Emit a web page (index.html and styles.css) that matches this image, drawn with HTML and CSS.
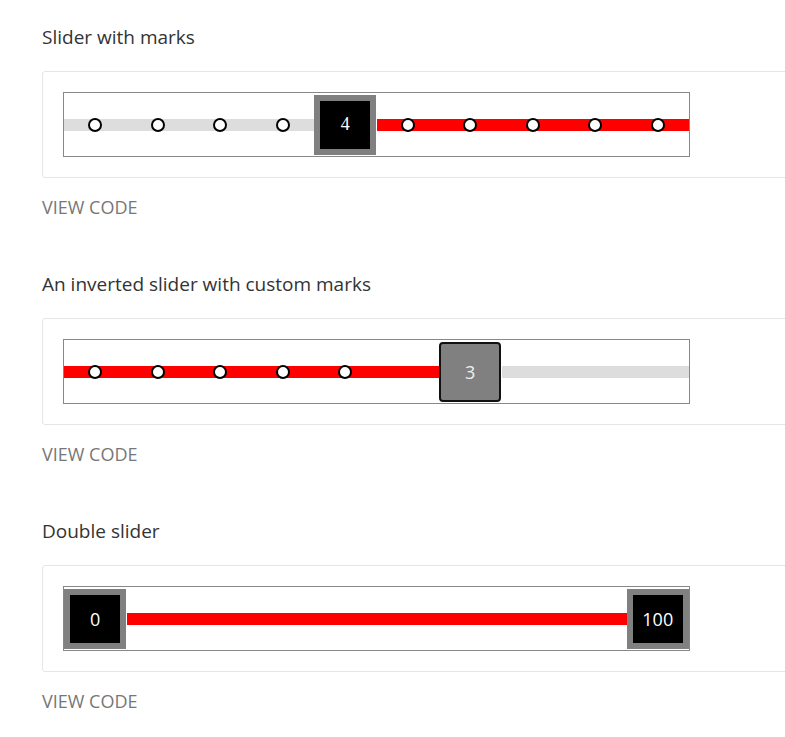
FILE: index.html
```html
<!DOCTYPE html>
<html lang="en">

<head>
  <meta charset="UTF-8">
  <meta name="viewport" content="width=device-width, initial-scale=1.0">
  <title>Sliders</title>
  <link rel="stylesheet" href="styles.css">
</head>

<body>
  <div class="demo">
    <section class="demo__section">
      <h2 class="demo__title">Slider with marks</h2>
      <div class="demo__card">
        <div class="slider">
          <div class="slider__segment slider__segment--off">
            <div class="slider__cell"><span class="slider__mark"></span></div>
            <div class="slider__cell"><span class="slider__mark"></span></div>
            <div class="slider__cell"><span class="slider__mark"></span></div>
            <div class="slider__cell"><span class="slider__mark"></span></div>
          </div>
          <div class="slider__cell"><span class="slider__thumb">4</span></div>
          <div class="slider__segment slider__segment--on">
            <div class="slider__cell"><span class="slider__mark"></span></div>
            <div class="slider__cell"><span class="slider__mark"></span></div>
            <div class="slider__cell"><span class="slider__mark"></span></div>
            <div class="slider__cell"><span class="slider__mark"></span></div>
            <div class="slider__cell"><span class="slider__mark"></span></div>
          </div>
        </div>
      </div>
      <a class="demo__link">VIEW CODE</a>
    </section>

    <section class="demo__section">
      <h2 class="demo__title">An inverted slider with custom marks</h2>
      <div class="demo__card">
        <div class="slider">
          <div class="slider__segment slider__segment--on">
            <div class="slider__cell"><span class="slider__mark"></span></div>
            <div class="slider__cell"><span class="slider__mark"></span></div>
            <div class="slider__cell"><span class="slider__mark"></span></div>
            <div class="slider__cell"><span class="slider__mark"></span></div>
            <div class="slider__cell"><span class="slider__mark"></span></div>
            <div class="slider__cell"></div>
          </div>
          <div class="slider__cell"><span class="slider__thumb slider__thumb--soft">3</span></div>
          <div class="slider__segment slider__segment--off">
            <div class="slider__cell"></div>
            <div class="slider__cell"></div>
            <div class="slider__cell"></div>
          </div>
        </div>
      </div>
      <a class="demo__link">VIEW CODE</a>
    </section>

    <section class="demo__section">
      <h2 class="demo__title">Double slider</h2>
      <div class="demo__card">
        <div class="slider">
          <div class="slider__cell"><span class="slider__thumb slider__thumb--sans">0</span></div>
          <div class="slider__segment slider__segment--on slider__segment--grow"></div>
          <div class="slider__cell"><span class="slider__thumb slider__thumb--sans">100</span></div>
        </div>
      </div>
      <a class="demo__link">VIEW CODE</a>
    </section>
  </div>
</body>

</html>
```

FILE: styles.css
```css
body {
  margin: 0;
  overflow-x: hidden;
  background: #fff;
  font-family: "Open Sans", "Noto Sans", Arial, sans-serif;
  color: #333;
}

.demo {
  padding: 20px 0 0 42px;
}

.demo__section {
  margin-bottom: 47px;
}

.demo__title {
  margin: 0;
  font-size: 19px;
  font-weight: 400;
  line-height: 34px;
  color: #333;
}

.demo__card {
  width: 780px;
  margin-top: 17px;
  padding: 20px;
  border: 1px solid #e6e6e6;
  border-radius: 3px;
}

.demo__link {
  display: block;
  margin-top: 16px;
  font-size: 18px;
  line-height: 26px;
  color: #777;
  text-transform: uppercase;
}

.slider {
  display: flex;
  width: 625px;
  height: 63px;
  border: 1px solid #888;
}

.slider__segment {
  flex: 0 0 auto;
  display: flex;
}

.slider__segment--grow {
  flex: 1 1 auto;
}

.slider__segment--off {
  background: linear-gradient(#ddd, #ddd) center / 100% 12px no-repeat;
}

.slider__segment--on {
  background: linear-gradient(#f00, #f00) center / 100% 12px no-repeat;
}

.slider__cell {
  flex: 0 0 62.5px;
  display: flex;
  align-items: center;
  justify-content: center;
}

.slider__mark {
  box-sizing: border-box;
  width: 14px;
  height: 14px;
  border: 2px solid #000;
  border-radius: 50%;
  background: #fff;
}

.slider__thumb {
  box-sizing: border-box;
  display: flex;
  align-items: center;
  justify-content: center;
  width: 62px;
  height: 60px;
  border: 6px solid #808080;
  background: #000;
  color: #fff;
  font-family: "Liberation Serif", "Times New Roman", serif;
  font-size: 18px;
}

.slider__thumb--soft {
  border: 2px solid #111;
  border-radius: 4px;
  background: #808080;
  color: #eee;
  font-family: "Open Sans", Arial, sans-serif;
}

.slider__thumb--sans {
  font-family: "Open Sans", Arial, sans-serif;
}
```
